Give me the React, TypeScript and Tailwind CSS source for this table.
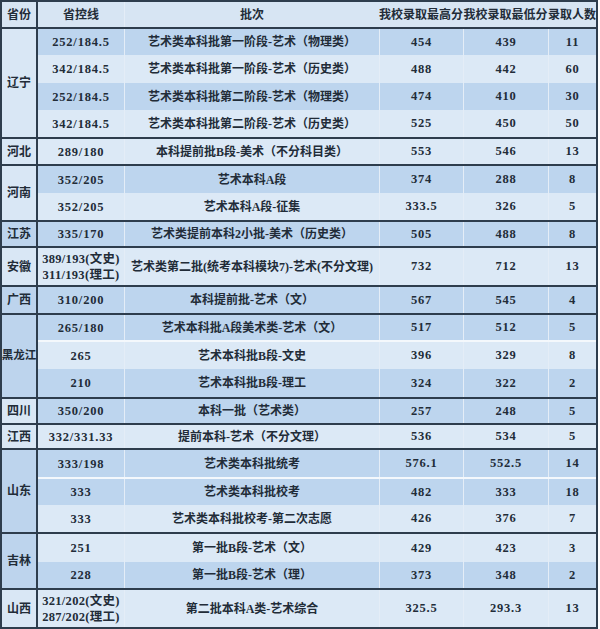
import React from 'react';

type Row = {
  line: string;
  batch: string;
  hi: string;
  lo: string;
  n: string;
  dark: boolean;
  h: number;
  sep?: boolean;
};

type Group = { prov: string; provDark: boolean; rows: Row[] };

const GROUPS: Group[] = [
  {
    prov: '辽宁',
    provDark: false,
    rows: [
      { line: '252/184.5', batch: '艺术类本科批第一阶段-艺术（物理类）', hi: '454', lo: '439', n: '11', dark: true, h: 28 },
      { line: '342/184.5', batch: '艺术类本科批第一阶段-艺术（历史类）', hi: '488', lo: '442', n: '60', dark: false, h: 28 },
      { line: '252/184.5', batch: '艺术类本科批第二阶段-艺术（物理类）', hi: '474', lo: '410', n: '30', dark: true, h: 27 },
      { line: '342/184.5', batch: '艺术类本科批第二阶段-艺术（历史类）', hi: '525', lo: '450', n: '50', dark: false, h: 27 },
    ],
  },
  {
    prov: '河北',
    provDark: false,
    rows: [{ line: '289/180', batch: '本科提前批B段-美术（不分科目类）', hi: '553', lo: '546', n: '13', dark: false, h: 27 }],
  },
  {
    prov: '河南',
    provDark: false,
    rows: [
      { line: '352/205', batch: '艺术本科A段', hi: '374', lo: '288', n: '8', dark: true, h: 29 },
      { line: '352/205', batch: '艺术本科A段-征集', hi: '333.5', lo: '326', n: '5', dark: false, h: 27 },
    ],
  },
  {
    prov: '江苏',
    provDark: true,
    rows: [{ line: '335/170', batch: '艺术类提前本科2小批-美术（历史类）', hi: '505', lo: '488', n: '8', dark: true, h: 26 }],
  },
  {
    prov: '安徽',
    provDark: false,
    rows: [
      { line: '389/193(文史)\n311/193(理工)', batch: '艺术类第二批(统考本科模块7)-艺术(不分文理)', hi: '732', lo: '712', n: '13', dark: false, h: 39 },
    ],
  },
  {
    prov: '广西',
    provDark: true,
    rows: [{ line: '310/200', batch: '本科提前批-艺术（文）', hi: '567', lo: '545', n: '4', dark: true, h: 28 }],
  },
  {
    prov: '黑龙江',
    provDark: true,
    rows: [
      { line: '265/180', batch: '艺术本科批A段美术类-艺术（文）', hi: '517', lo: '512', n: '5', dark: true, h: 27 },
      { line: '265', batch: '艺术本科批B段-文史', hi: '396', lo: '329', n: '8', dark: false, h: 29, sep: true },
      { line: '210', batch: '艺术本科批B段-理工', hi: '324', lo: '322', n: '2', dark: true, h: 28 },
    ],
  },
  {
    prov: '四川',
    provDark: false,
    rows: [{ line: '350/200', batch: '本科一批（艺术类）', hi: '257', lo: '248', n: '5', dark: true, h: 26 }],
  },
  {
    prov: '江西',
    provDark: false,
    rows: [{ line: '332/331.33', batch: '提前本科-艺术（不分文理）', hi: '536', lo: '534', n: '5', dark: false, h: 25 }],
  },
  {
    prov: '山东',
    provDark: true,
    rows: [
      { line: '333/198', batch: '艺术类本科批统考', hi: '576.1', lo: '552.5', n: '14', dark: true, h: 29 },
      { line: '333', batch: '艺术类本科批校考', hi: '482', lo: '333', n: '18', dark: true, h: 28, sep: true },
      { line: '333', batch: '艺术类本科批校考-第二次志愿', hi: '426', lo: '376', n: '7', dark: false, h: 27 },
    ],
  },
  {
    prov: '吉林',
    provDark: true,
    rows: [
      { line: '251', batch: '第一批B段-艺术（文）', hi: '429', lo: '423', n: '3', dark: false, h: 30 },
      { line: '228', batch: '第一批B段-艺术（理）', hi: '373', lo: '348', n: '2', dark: true, h: 26 },
    ],
  },
  {
    prov: '山西',
    provDark: false,
    rows: [
      { line: '321/202(文史)\n287/202(理工)', batch: '第二批本科A类-艺术综合', hi: '325.5', lo: '293.3', n: '13', dark: false, h: 39 },
    ],
  },
];

function Cells({ r }: { r: Row }) {
  const cell = 'flex items-center justify-center text-center';
  const num = 'text-[12.5px] tracking-[0.8px]';
  const multi = r.line.includes('\n');
  return (
    <>
      <div
        className={`${cell} w-[86px] whitespace-pre-line leading-[16px] ${
          multi ? 'text-[12.5px] tracking-[0.3px]' : num
        }`}
      >
        {r.line}
      </div>
      <div className={`${cell} w-[255px] border-l border-[#e4edf7]`}>{r.batch}</div>
      <div className={`${cell} ${num} w-[84px] border-l border-[#e4edf7]`}>{r.hi}</div>
      <div className={`${cell} ${num} w-[85px] border-l border-[#e4edf7]`}>{r.lo}</div>
      <div className={`${cell} ${num} w-[48px] border-l border-[#e4edf7]`}>{r.n}</div>
    </>
  );
}

export default function App() {
  return (
    <div className="w-[600px] h-[629px] bg-white">
      <div
        className="w-[598px] border-2 border-[#2e3d4d] text-[12px] font-bold text-[#222c38]"
        style={{ fontFamily: '"Liberation Serif", "Noto Sans CJK SC", serif' }}
      >
        {/* Header */}
        <div className="flex h-[25px] bg-[#d7e5f3]">
          <div className="w-[36px] flex items-center justify-center border-r-2 border-[#2e3d4d]">省份</div>
          <div className="w-[86px] flex items-center justify-center">省控线</div>
          <div className="w-[255px] flex items-center justify-center border-l border-[#e4edf7]">批次</div>
          <div className="w-[84px] flex items-center justify-center whitespace-nowrap">我校录取最高分</div>
          <div className="w-[85px] flex items-center justify-center whitespace-nowrap">我校录取最低分</div>
          <div className="w-[48px] flex items-center justify-center whitespace-nowrap">录取人数</div>
        </div>

        {GROUPS.map((g) => (
          <div key={g.prov} className="flex border-t-2 border-[#2e3d4d]">
            <div
              className={`w-[36px] flex items-center justify-center whitespace-nowrap border-r-2 border-[#2e3d4d] ${
                g.prov.length > 2 ? 'text-[11.5px]' : ''
              } ${g.provDark ? 'bg-[#bdd4ed]' : 'bg-[#d9e7f5]'}`}
            >
              {g.prov}
            </div>
            <div className="flex flex-col">
              {g.rows.map((r, i) => (
                <div
                  key={i}
                  className={`flex ${r.dark ? 'bg-[#bdd5ee]' : 'bg-[#dce9f6]'} ${
                    r.sep ? 'border-t-2 border-[#f4f8fc]' : ''
                  }`}
                  style={{ height: i === 0 ? r.h - 2 : r.h }}
                >
                  <Cells r={r} />
                </div>
              ))}
            </div>
          </div>
        ))}
      </div>
    </div>
  );
}
